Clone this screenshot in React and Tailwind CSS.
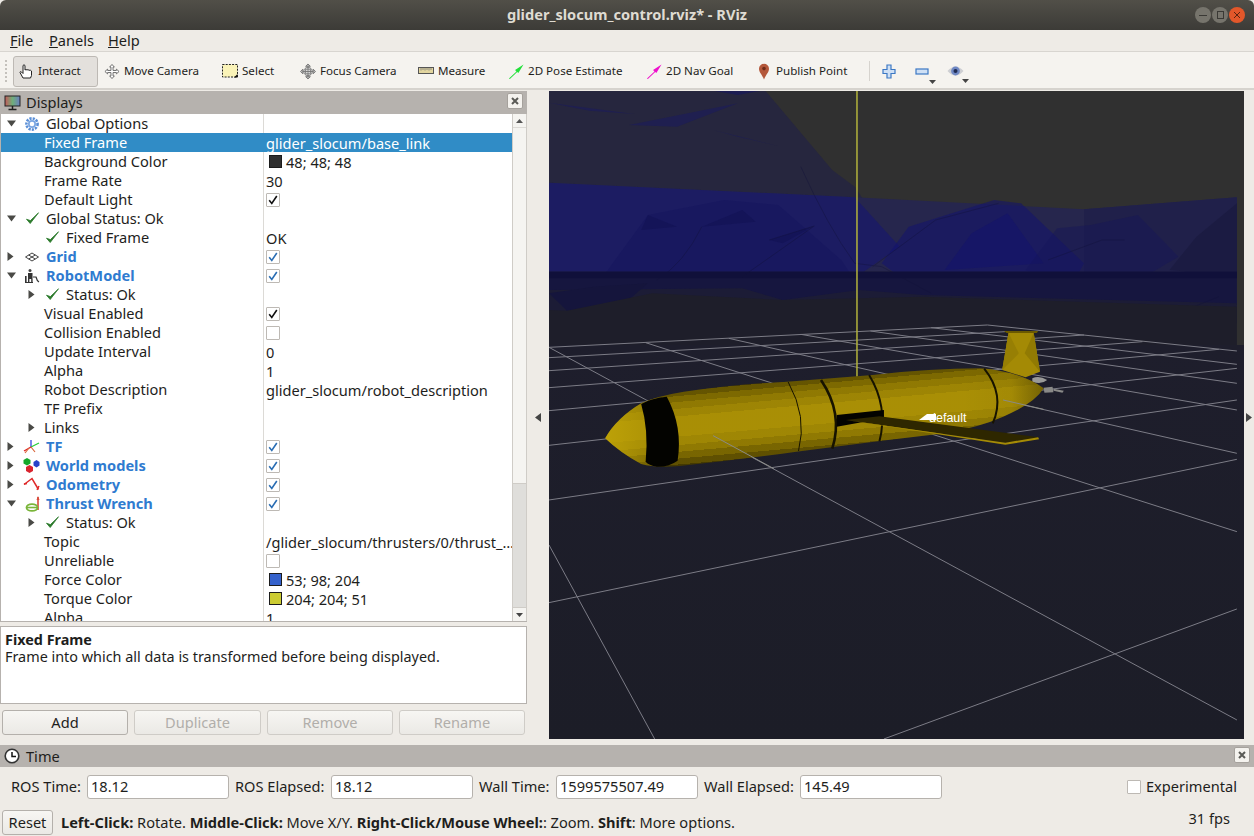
import React from "react";

const FONT = "font-['Noto_Sans','DejaVu_Sans',sans-serif]";

const Gear = () => (
  <svg width="16" height="16" viewBox="0 0 16 16">
    <circle cx="8" cy="8" r="5.6" fill="none" stroke="#5b8fd6" strokeWidth="2.6" strokeDasharray="2.2 1.1" />
    <circle cx="8" cy="8" r="4" fill="#7aa6e2" />
    <circle cx="8" cy="8" r="2.3" fill="#fff" />
  </svg>
);
const Check = () => (
  <svg width="15" height="15" viewBox="0 0 15 15">
    <path d="M1.5 8.2 L5.2 12.5 L13.5 1.8 L5.4 9.6 Z" fill="#2b7a2b" stroke="#2b7a2b" strokeWidth="0.8" strokeLinejoin="round" />
  </svg>
);
const GridIcon = () => (
  <svg width="16" height="16" viewBox="0 0 16 16" fill="none" stroke="#444" strokeWidth="1">
    <path d="M1.5 8 L8 4 L14.5 8 L8 12 Z M4.7 6 L11.2 10 M11.2 6 L4.7 10" />
  </svg>
);
const RobotIcon = () => (
  <svg width="16" height="16" viewBox="0 0 16 16">
    <circle cx="6" cy="2.5" r="1.5" fill="#444" />
    <rect x="4" y="5" width="4.5" height="6" fill="#333" />
    <rect x="1" y="8" width="1.6" height="6" fill="#333" />
    <rect x="4" y="11" width="1.4" height="3.5" fill="#333" />
    <rect x="7.2" y="11" width="1.4" height="3.5" fill="#333" />
    <path d="M9 9 H12 Q13 13 15 14" stroke="#333" strokeWidth="1.2" fill="none" />
    <path d="M1 14.5 H9" stroke="#333" strokeWidth="1" />
  </svg>
);
const TFIcon = () => (
  <svg width="17" height="17" viewBox="0 0 17 17" fill="none" strokeWidth="1.2">
    <path d="M8 9 L8 2" stroke="#2233dd" />
    <path d="M8 9 L16 5" stroke="#22cc33" />
    <path d="M8 9 L1 13" stroke="#e02222" />
    <path d="M8 9 L12 14 M2 15 L6 10" stroke="#d9663a" />
  </svg>
);
const ModelsIcon = () => (
  <svg width="18" height="18" viewBox="0 0 18 18">
    <path d="M4 1 L7.5 3 V6.5 L4 8.5 L0.5 6.5 V3 Z" fill="#14a82a" />
    <path d="M13.5 3 L16.5 5 V8.5 L13.5 10.5 L10.5 8.5 V5 Z" fill="#2743c9" />
    <path d="M6.5 8 L10 10 V14 L6.5 16 L3 14 V10 Z" fill="#d9232e" />
  </svg>
);
const OdomIcon = () => (
  <svg width="17" height="15" viewBox="0 0 17 15" fill="none" stroke="#df2a2a" strokeWidth="1.5">
    <path d="M1 7.5 L9 1.5 L15.5 12.5" />
    <path d="M1 7 L4 6.5 M14 12.8 L16 9" />
  </svg>
);
const ThrustIcon = () => (
  <svg width="16" height="18" viewBox="0 0 16 18" fill="none">
    <path d="M13 15 V2" stroke="#d84a3a" strokeWidth="1.6" />
    <path d="M11.5 5 L13 1 L14.5 5 Z" fill="#d84a3a" />
    <ellipse cx="7" cy="12.5" rx="5.5" ry="3.4" stroke="#7ab53a" strokeWidth="1.8" />
    <path d="M1 12.5 H13" stroke="#7ab53a" strokeWidth="1.6" />
  </svg>
);
const icons = { gear: Gear, check: Check, grid: GridIcon, robot: RobotIcon, tf: TFIcon, models: ModelsIcon, odom: OdomIcon, thrust: ThrustIcon };

const rows = [
  { x: 46, arrow: "d", ax: 6, icon: "gear", ix: 24, label: "Global Options" },
  { x: 44, label: "Fixed Frame", value: "glider_slocum/base_link", sel: true },
  { x: 44, label: "Background Color", swatch: "#303030", value: "48; 48; 48" },
  { x: 44, label: "Frame Rate", value: "30" },
  { x: 44, label: "Default Light", box: "k" },
  { x: 46, arrow: "d", ax: 6, icon: "check", ix: 25, label: "Global Status: Ok" },
  { x: 66, icon: "check", ix: 45, label: "Fixed Frame", value: "OK" },
  { x: 46, arrow: "r", ax: 7, icon: "grid", ix: 24, label: "Grid", bold: true, box: "b" },
  { x: 46, arrow: "d", ax: 6, icon: "robot", ix: 24, label: "RobotModel", bold: true, box: "b" },
  { x: 66, arrow: "r", ax: 28, icon: "check", ix: 45, label: "Status: Ok" },
  { x: 44, label: "Visual Enabled", box: "k" },
  { x: 44, label: "Collision Enabled", box: "e" },
  { x: 44, label: "Update Interval", value: "0" },
  { x: 44, label: "Alpha", value: "1" },
  { x: 44, label: "Robot Description", value: "glider_slocum/robot_description" },
  { x: 44, label: "TF Prefix" },
  { x: 44, arrow: "r", ax: 28, label: "Links" },
  { x: 46, arrow: "r", ax: 7, icon: "tf", ix: 23, label: "TF", bold: true, box: "b" },
  { x: 46, arrow: "r", ax: 7, icon: "models", ix: 23, label: "World models", bold: true, box: "b" },
  { x: 46, arrow: "r", ax: 7, icon: "odom", ix: 23, label: "Odometry", bold: true, box: "b" },
  { x: 46, arrow: "d", ax: 6, icon: "thrust", ix: 25, label: "Thrust Wrench", bold: true, box: "b" },
  { x: 66, arrow: "r", ax: 28, icon: "check", ix: 45, label: "Status: Ok" },
  { x: 44, label: "Topic", value: "/glider_slocum/thrusters/0/thrust_…" },
  { x: 44, label: "Unreliable", box: "e" },
  { x: 44, label: "Force Color", swatch: "#3562cc", value: "53; 98; 204" },
  { x: 44, label: "Torque Color", swatch: "#cccc33", value: "204; 204; 51" },
  { x: 44, label: "Alpha", value: "1" },
];

const Arrow = ({ dir }) =>
  dir === "d" ? (
    <svg width="11" height="7" viewBox="0 0 11 7"><path d="M1 0.5 H10 L5.5 6.5 Z" fill="#4a4a46" /></svg>
  ) : (
    <svg width="7" height="11" viewBox="0 0 7 11"><path d="M0.5 1 V10 L6.5 5.5 Z" fill="#4a4a46" /></svg>
  );

const CheckBox = ({ kind }) => (
  <span className="w-[14px] h-[14px] bg-white border border-[#bdb9b4] rounded-[1px] flex items-center justify-center">
    {kind !== "e" && (
      <svg width="10" height="10" viewBox="0 0 10 10" fill="none" stroke={kind === "b" ? "#2a6db3" : "#111"} strokeWidth="1.6">
        <path d="M1.2 5.2 L3.8 8.5 L8.8 1" />
      </svg>
    )}
  </span>
);

const Row = ({ r }) => {
  const Ic = r.icon && icons[r.icon];
  return (
    <div className={`h-[19px] flex shrink-0 ${r.sel ? "bg-[#308cc6] text-white" : "text-[#1e1e1c]"}`}>
      <div className={`relative w-[263px] h-full shrink-0 ${r.sel ? "" : "border-r border-[#dcdad6]"}`}>
        {r.arrow && (
          <span className="absolute top-0 h-[19px] flex items-center" style={{ left: r.ax - 1 }}><Arrow dir={r.arrow} /></span>
        )}
        {Ic && (
          <span className="absolute top-0 h-[19px] flex items-center" style={{ left: r.ix - 1 }}><Ic /></span>
        )}
        <span className={`absolute top-0 leading-[18px] whitespace-nowrap ${r.bold ? "font-bold text-[#2f7bd0]" : ""}`} style={{ left: r.x - 1 }}>{r.label}</span>
      </div>
      <div className="flex-1 flex items-center pl-[2px] whitespace-nowrap leading-[18px]">
        {r.swatch && <span className="ml-[3px] mr-[4px] w-[13px] h-[13px] border border-[#1c1c1c]" style={{ background: r.swatch }} />}
        {r.box && <CheckBox kind={r.box} />}
        {r.value}
      </div>
    </div>
  );
};

const CloseBtn = () => (
  <span className="w-[16px] h-[16px] bg-[#f4f2ee] border border-[#a5a19c] rounded-[2px] flex items-center justify-center">
    <svg width="8" height="8" viewBox="0 0 8 8" stroke="#5a5a56" strokeWidth="2"><path d="M1 1 L7 7 M7 1 L1 7" /></svg>
  </span>
);

const TB = ({ ml, w, icon, children }) => (
  <div className="flex items-center shrink-0 h-[30px]" style={{ marginLeft: ml }}>
    <span className="w-[16px] h-[16px] flex items-center justify-center shrink-0">{icon}</span>
    <span className="ml-[4px] whitespace-nowrap text-[#1e1e1c] text-[11.6px]" style={{ width: w }}>{children}</span>
  </div>
);

const HandI = (
  <svg width="17" height="17" viewBox="0 0 17 17" fill="#fff" stroke="#222" strokeWidth="1"><path d="M5 15 L2 9.5 Q2 8 3.5 9 L5 10.5 V2.5 Q6 1 7 2.5 V7 Q8 6 9 7 Q10 6 11 7.3 Q12.3 6.6 13.5 8 V12.5 L12.5 15 Z" /></svg>
);
const MoveI = (
  <svg width="17" height="17" viewBox="0 0 17 17" fill="#fff" stroke="#666" strokeWidth="1"><path d="M8.5 1 L11 3.8 H9.6 V7.4 H13.2 V6 L16 8.5 L13.2 11 V9.6 H9.6 V13.2 H11 L8.5 16 L6 13.2 H7.4 V9.6 H3.8 V11 L1 8.5 L3.8 6 V7.4 H7.4 V3.8 H6 Z" /></svg>
);
const SelectI = (
  <svg width="16" height="14" viewBox="0 0 16 14"><rect x="0.5" y="0.5" width="15" height="12.5" fill="#faf3b8" stroke="#222" strokeDasharray="2 1.2" /><path d="M12 13.5 H15.5 V10 Z" fill="#111" /></svg>
);
const FocusI = (
  <svg width="17" height="17" viewBox="0 0 17 17" fill="none" stroke="#777" strokeWidth="1"><path d="M8.5 0.5 L11 3 H6 Z M8.5 16.5 L11 14 H6 Z M0.5 8.5 L3 6 V11 Z M16.5 8.5 L14 6 V11 Z" fill="#bbb" /><circle cx="8.5" cy="8.5" r="4.5" fill="#e6e6e6" /><path d="M8.5 3 V14 M3 8.5 H14 M6 6 H11 V11 H6 Z" /></svg>
);
const RulerI = (
  <svg width="16" height="8" viewBox="0 0 16 8"><rect x="0.5" y="0.5" width="15" height="6" fill="#e2d59f" stroke="#555" /><path d="M3 1 V3.5 M5 1 V3 M7 1 V3.5 M9 1 V3 M11 1 V3.5 M13 1 V3" stroke="#777" strokeWidth="0.8" /></svg>
);
const ArrowI = (c) => (
  <svg width="17" height="17" viewBox="0 0 17 17"><path d="M1 16 L9 8.5 L7.5 7 L16.5 1 L11 10 L9.8 9 L2 16.5 Z" fill={c} /></svg>
);
const PinI = (
  <svg width="14" height="17" viewBox="0 0 14 17"><path d="M7 16.5 C5 11.5 2 9.5 2 5.8 A5 5 0 0 1 12 5.8 C12 9.5 9 11.5 7 16.5 Z" fill="#b4573a" /><circle cx="7" cy="5.6" r="1.8" fill="#6e2c1a" /></svg>
);
const Plus = (
  <svg width="14" height="15" viewBox="0 0 14 15"><path d="M5 1 H9 V5.5 H13 V9.5 H9 V14 H5 V9.5 H1 V5.5 H5 Z" fill="#cfe0f5" stroke="#3c78c4" strokeWidth="1.2" /></svg>
);
const Minus = (
  <svg width="14" height="7" viewBox="0 0 14 7"><rect x="1" y="1" width="12" height="5" fill="#cfe0f5" stroke="#3c78c4" strokeWidth="1.2" /></svg>
);
const Eye = (
  <svg width="17" height="12" viewBox="0 0 17 12"><path d="M0.5 6 Q8.5 -3 16.5 6 Q8.5 15 0.5 6 Z" fill="#cdced2" /><circle cx="8.5" cy="6" r="4.4" fill="#6f88c4" /><circle cx="8.5" cy="6" r="2" fill="#1f2b52" /></svg>
);
const Drop = () => <svg width="7" height="4" viewBox="0 0 7 4"><path d="M0 0 H7 L3.5 4 Z" fill="#444" /></svg>;

const Btn = ({ w, disabled, children }) => (
  <div className={`h-[25px] shrink-0 flex items-center justify-center rounded-[3px] border ${disabled ? "border-[#cfccc7] text-[#b1aeaa]" : "border-[#b4b0ab] text-[#1e1e1c]"} bg-gradient-to-b from-[#f7f6f3] to-[#ebe9e5]`} style={{ width: w }}>{children}</div>
);

const Field = ({ w, v }) => (
  <div className="h-[24px] bg-white border border-[#b6b2ad] rounded-[3px] pl-[3px] flex items-center shrink-0" style={{ width: w }}>{v}</div>
);
const Lab = ({ w, ml, children }) => (
  <span className="whitespace-nowrap shrink-0" style={{ width: w, marginLeft: ml }}>{children}</span>
);

const gridLines = [
  [0,82,975,15],[0,113,1015,35],[0,152,1190,45],[0,203,1320,65],[0,272,1490,88],[0,376,1530,145],[0,540,1530,240],[0,848,1530,418],[745,1257,1530,867],
  [975,15,1530,93],[850,23,1530,133],[715,33,1530,190],[560,43,1530,270],[400,55,1530,400],[215,68,1530,635],[0,82,1530,1200],[0,675,235,1257],
];

const bodyPath = "M125 355 Q150 295 205 250 Q240 228 300 215 Q420 192 530 185 L720 165 Q850 145 960 145 Q1050 155 1100 205 Q1080 250 1010 290 Q960 320 880 340 L740 362 L550 395 Q420 420 290 438 Q240 445 205 432 Q160 400 125 355 Z";

const bodyStops = [
  [0, "#3a3000"], [0.06, "#3a3000"], [0.06, "#5a4b00"], [0.12, "#5a4b00"], [0.12, "#756200"], [0.19, "#756200"],
  [0.19, "#8a7402"], [0.27, "#8a7402"], [0.27, "#998104"], [0.36, "#998104"], [0.36, "#a68c05"], [0.6, "#a68c05"],
  [0.6, "#9b8304"], [0.7, "#9b8304"], [0.7, "#8a7402"], [0.78, "#8a7402"], [0.78, "#705e00"], [0.86, "#705e00"],
  [0.86, "#544600"], [0.93, "#544600"], [0.93, "#362d00"], [1, "#362d00"],
];

const Scene = () => (
  <svg className="block" width="695" height="648" viewBox="549 91 695 648">
    <defs>
      <linearGradient id="body" gradientUnits="userSpaceOnUse" x1="560" y1="165" x2="590" y2="415">
        {bodyStops.map((s, i) => <stop key={i} offset={s[0]} stopColor={s[1]} />)}
      </linearGradient>
      <linearGradient id="tail" gradientUnits="userSpaceOnUse" x1="920" y1="0" x2="1100" y2="0">
        <stop offset="0" stopColor="#000" stopOpacity="0" />
        <stop offset="0.6" stopColor="#000" stopOpacity="0.04" />
        <stop offset="1" stopColor="#000" stopOpacity="0.35" />
      </linearGradient>
      <linearGradient id="nose" gradientUnits="userSpaceOnUse" x1="125" y1="0" x2="260" y2="0">
        <stop offset="0" stopColor="#c4a808" stopOpacity="0.75" />
        <stop offset="1" stopColor="#c4a808" stopOpacity="0.1" />
      </linearGradient>
      <linearGradient id="floor" x1="0" y1="0" x2="0" y2="1">
        <stop offset="0" stopColor="#1e1e2c" />
        <stop offset="1" stopColor="#1c1d27" />
      </linearGradient>
    </defs>
    <rect x="549" y="91" width="695" height="648" fill="#303030" />
    <g transform="translate(549 90) scale(0.4496 0.3333)">
      <path d="M0 0 H480 L630 240 L680 290 L700 330 L0 278 Z" fill="#26263e" />
      <path d="M0 38 L190 72 L90 62 Z M178 105 L420 40 L285 110 Z M365 120 L510 168 L420 140 Z" fill="#1f1f50" />
      <path d="M355 0 H480 L420 15 Z" fill="#1c1c52" />
      <path d="M0 278 L680 322 L1190 358 L1530 322 V545 H0 Z" fill="#26264d" />
      <path d="M0 278 L680 322 L780 470 L700 545 H0 Z" fill="#1c1c62" />
      <path d="M1190 358 L1530 322 V545 H1190 Z" fill="#20204a" />
      <path d="M800 410 L990 330 L1050 340 L1190 520 L1170 570 L780 560 L740 520 Z" fill="#121270" opacity="0.55" />
      <path d="M880 540 L940 430 L1020 370 L1100 520 Z" fill="#101070" opacity="0.4" />
      <path d="M1060 540 L1130 415 L1205 405 L1310 375 L1400 500 L1300 580 L1120 580 Z" fill="#14145a" opacity="0.4" />
      <path d="M120 560 L220 375 L390 330 L510 345 L650 510 L690 590 L440 590 L120 590 Z" fill="#10105a" opacity="0.28" />
      <path d="M340 410 L430 360 L460 395 Z M205 420 L220 375 L285 410 Z M490 450 L590 408 L520 460 Z" fill="#10104f" opacity="0.45" />
      <path d="M1530 340 L1440 440 L1380 540 L1530 560 Z" fill="#1a1a40" opacity="0.8" />
      <rect x="0" y="545" width="1530" height="100" fill="#16163f" />
      <path d="M0 545 H1530 V565 H0 Z" fill="#10103a" />
      <path d="M0 600 L430 595 L520 630 L690 600 L830 615 L1530 640 V700 H0 Z" fill="#1c1c36" />
      <path d="M0 610 L40 662 L160 650 L220 580 L100 590 Z" fill="#15153c" />
      <g fill="none" stroke="#12123a" strokeWidth="1" opacity="0.4">
        <path vectorEffect="non-scaling-stroke" d="M560 230 Q620 410 680 520 L740 530 L850 610" />
        <path vectorEffect="non-scaling-stroke" d="M340 410 Q300 520 240 570" />
        <path vectorEffect="non-scaling-stroke" d="M720 530 L860 390 L1000 340" />
        <path vectorEffect="non-scaling-stroke" d="M1110 510 L1230 450 L1280 450" />
        <path vectorEffect="non-scaling-stroke" d="M1380 680 L1490 620" />
        <path vectorEffect="non-scaling-stroke" d="M490 450 L590 408 L430 560" />
      </g>
      <path d="M0 660 V790 H1530 V650 L1400 645 L830 620 L520 630 L230 610 L40 662 Z" fill="#1e1e2a" />
    </g>
    <rect x="549" y="345" width="695" height="394" fill="url(#floor)" />
    <g transform="translate(549 320) scale(0.4496 0.3333)">
      <g stroke="#7c7c86" strokeWidth="1" fill="none">
        {gridLines.map((l, i) => (
          <line key={i} vectorEffect="non-scaling-stroke" x1={l[0]} y1={l[1]} x2={l[2]} y2={l[3]} />
        ))}
      </g>
      <path vectorEffect="non-scaling-stroke" d="M685 -690 V170" stroke="#b3b33c" strokeWidth="1.5" />
      <path d="M1008 150 L1022 38 H1078 L1092 155 L1060 172 Z" fill="#a48a05" />
      <path d="M1022 38 L1045 100 L1008 150 Z" fill="#977f04" />
      <path d="M1078 38 L1058 100 L1092 155 Z" fill="#917a03" />
      <path d="M1012 33 H1088 L1085 39 H1018 Z" fill="#6b5900" />
      <path d="M1075 175 Q1090 165 1108 180 Q1095 195 1075 185 Z" fill="#9a9a98" />
      <path d="M1100 203 L1120 200 L1122 217 L1102 218 Z" fill="#8a8a88" />
      <path d="M1122 206 L1145 212 L1142 218 L1122 212 Z" fill="#8a8a88" />
      <path d={bodyPath} fill="url(#body)" />
      <path d={bodyPath} fill="url(#tail)" />
      <path d={bodyPath} fill="url(#nose)" />
      <path d="M205 252 Q225 235 262 230 Q298 320 286 422 Q265 442 240 440 Q222 436 215 425 Q222 330 205 252 Z" fill="#030300" />
      <g fill="none" stroke="#171300">
        <path vectorEffect="non-scaling-stroke" d="M532 186 Q575 290 555 393" strokeWidth="1" />
        <path vectorEffect="non-scaling-stroke" d="M605 180 Q655 280 630 386" strokeWidth="2.6" />
        <path vectorEffect="non-scaling-stroke" d="M712 165 Q755 260 735 364" strokeWidth="2" />
        <path vectorEffect="non-scaling-stroke" d="M968 146 Q1015 225 987 310" strokeWidth="2" />
      </g>
      <path d="M640 285 L745 270 V295 L640 320 Z" fill="#030300" />
      <path d="M660 300 L735 289 L1090 352 L1015 368 Z" fill="#2e2700" />
      <path d="M660 300 L1015 368 L1088 352 L1090 358 L1015 374 Z" fill="#a58b05" />
      <g stroke="#8a8a86" strokeWidth="1" fill="none">
        <line vectorEffect="non-scaling-stroke" x1="365" y1="347" x2="500" y2="446" />
        <line vectorEffect="non-scaling-stroke" x1="1010" y1="240" x2="1100" y2="268" />
      </g>
    </g>
    <g fontFamily="'Liberation Sans',sans-serif" fontSize="12.5" fill="#fff">
      <path d="M919 420 L927 414 H936 V420 Z" fill="#fff" />
      <text x="929" y="422">default</text>
    </g>
  </svg>
);

export default function App() {
  return (
    <div className={`w-[1254px] h-[836px] overflow-hidden flex flex-col bg-[#eeebe6] text-[14.6px] text-[#1e1e1c] ${FONT}`}>
      <div className="h-[30px] shrink-0 rounded-t-[6px] bg-gradient-to-b from-[#514f48] to-[#3c3b37] flex items-center justify-center relative">
        <span className="font-bold text-[14.6px] text-[#dfdbd2]">glider_slocum_control.rviz* - RViz</span>
        <div className="absolute right-[9px] top-[7px] flex gap-[1px]">
          <span className="w-[16px] h-[16px] rounded-full bg-[#76746c] flex items-center justify-center"><span className="w-[8px] h-[1px] bg-[#3a3935]" /></span>
          <span className="w-[16px] h-[16px] rounded-full bg-[#76746c] flex items-center justify-center"><span className="w-[7px] h-[8px] border border-[#3a3935]" /></span>
          <span className="w-[16px] h-[16px] rounded-full bg-[#e2572a] flex items-center justify-center">
            <svg width="8" height="8" viewBox="0 0 8 8" stroke="#5a2410" strokeWidth="1"><path d="M1 1 L7 7 M7 1 L1 7" /></svg>
          </span>
        </div>
      </div>
      <div className="h-[22px] shrink-0 flex items-center border-b border-[#d8d5d0] pl-[10px] gap-[14px]">
        <span className="w-[25px]"><span className="underline">F</span>ile</span>
        <span className="w-[45px]"><span className="underline">P</span>anels</span>
        <span><span className="underline">H</span>elp</span>
      </div>
      <div className="h-[38px] shrink-0 bg-[#f5f3ef] border-b-2 border-[#d6d3ce] flex items-center pt-[2px]">
        <div className="ml-[5px] w-[6px] h-[22px] border-l-2 border-dotted border-[#c4c1bc]" />
        <div className="ml-[2px] w-[85px] h-[31px] shrink-0 flex items-center bg-[#e3e0dc] border border-[#bdb9b4] rounded-[3px] pl-[4px]">
          <span className="w-[17px] flex justify-center">{HandI}</span>
          <span className="ml-[3px] text-[11.6px]">Interact</span>
        </div>
        <TB ml={6} w={84} icon={MoveI}>Move Camera</TB>
        <TB ml={14} w={58} icon={SelectI}>Select</TB>
        <TB ml={0} w={98} icon={FocusI}>Focus Camera</TB>
        <TB ml={0} w={70} icon={RulerI}>Measure</TB>
        <TB ml={0} w={118} icon={ArrowI("#22e03a")}>2D Pose Estimate</TB>
        <TB ml={0} w={90} icon={ArrowI("#ee11cc")}>2D Nav Goal</TB>
        <TB ml={0} w={92} icon={PinI}>Publish Point</TB>
        <div className="ml-[1px] w-px h-[20px] bg-[#d6d3ce]" />
        <span className="ml-[12px] w-[14px] flex justify-center">{Plus}</span>
        <span className="ml-[18px] w-[15px] flex justify-center relative">{Minus}<span className="absolute left-[15px] top-[12px] flex"><Drop /></span></span>
        <span className="ml-[18px] w-[17px] flex justify-center relative">{Eye}<span className="absolute left-[15px] top-[14px] flex"><Drop /></span></span>
      </div>
      <div className="h-[655px] shrink-0 flex">
        <div className="w-[527px] shrink-0 flex flex-col">
          <div className="mt-[1px] h-[23px] shrink-0 bg-[#b6b2ae] flex items-center pl-[4px] relative">
            <svg width="17" height="16" viewBox="0 0 17 16">
              <defs>
                <linearGradient id="mon" x1="0" x2="1" y1="0" y2="0">
                  <stop offset="0" stopColor="#c45a5a" /><stop offset="0.5" stopColor="#6fae7a" /><stop offset="1" stopColor="#6a7fc0" />
                </linearGradient>
              </defs>
              <rect x="1" y="1" width="15" height="10" fill="url(#mon)" stroke="#222" />
              <path d="M8.5 11 V14 M4.5 14.5 H12.5" stroke="#222" strokeWidth="1.5" />
            </svg>
            <span className="ml-[5px]">Displays</span>
            <span className="absolute left-[507px] top-[2px]"><CloseBtn /></span>
          </div>
          <div className="h-[508px] shrink-0 border-l border-[#b6b2ae] flex overflow-hidden bg-white border-b">
            <div className="w-[511px] shrink-0 flex flex-col overflow-hidden">
              {rows.map((r, i) => <Row key={i} r={r} />)}
            </div>
            <div className="w-[15px] shrink-0 flex flex-col border-x border-[#cfccc7] bg-[#f5f4f1]">
              <div className="h-[13px] flex items-center justify-center"><svg width="7" height="4" viewBox="0 0 7 4"><path d="M0 4 H7 L3.5 0 Z" fill="#555" /></svg></div>
              <div className="h-[356px] border-t border-[#dcdad6]" />
              <div className="flex-1 bg-[#dfdedb] border-t border-[#cfccc7]" />
              <div className="h-[14px] flex items-center justify-center border-t border-[#cfccc7]"><Drop /></div>
            </div>
          </div>
          <div className="h-[4px] shrink-0" />
          <div className="h-[78px] shrink-0 bg-white border border-[#b6b2ae] px-[4px] pt-[4px] leading-[17px] text-[14.4px]">
            <div className="font-bold">Fixed Frame</div>
            <div>Frame into which all data is transformed before being displayed.</div>
          </div>
          <div className="mt-[6px] ml-[2px] flex gap-[6px]">
            <Btn w={126}>Add</Btn>
            <Btn w={127} disabled>Duplicate</Btn>
            <Btn w={126} disabled>Remove</Btn>
            <Btn w={126} disabled>Rename</Btn>
          </div>
        </div>
        <div className="w-[22px] shrink-0 flex items-center justify-center">
          <svg width="6" height="9" viewBox="0 0 6 9"><path d="M6 0 V9 L0 4.5 Z" fill="#444" /></svg>
        </div>
        <div className="mt-[1px] w-[695px] h-[648px] shrink-0 overflow-hidden"><Scene /></div>
        <div className="w-[10px] shrink-0 flex items-center justify-center">
          <svg width="6" height="9" viewBox="0 0 6 9"><path d="M0 0 V9 L6 4.5 Z" fill="#444" /></svg>
        </div>
      </div>
      <div className="h-[22px] shrink-0 bg-[#b6b2ae] flex items-center pl-[4px] relative">
        <svg width="16" height="16" viewBox="0 0 16 16" fill="none"><circle cx="8" cy="8" r="6.8" fill="#fff" stroke="#333" strokeWidth="1.6" /><path d="M8 4 V8.5 H12" stroke="#111" strokeWidth="1.5" /></svg>
        <span className="ml-[6px] pt-[2px]">Time</span>
        <span className="absolute left-[1234px] top-[2px]"><CloseBtn /></span>
      </div>
      <div className="h-[35px] shrink-0 flex items-center pt-[4px]">
        <Lab ml={11} w={76}>ROS Time:</Lab>
        <Field w={142} v="18.12" />
        <Lab ml={6} w={96}>ROS Elapsed:</Lab>
        <Field w={142} v="18.12" />
        <Lab ml={6} w={77}>Wall Time:</Lab>
        <Field w={142} v="1599575507.49" />
        <Lab ml={6} w={96}>Wall Elapsed:</Lab>
        <Field w={142} v="145.49" />
        <span className="ml-[185px]"><CheckBox kind="e" /></span>
        <span className="ml-[5px] whitespace-nowrap">Experimental</span>
      </div>
      <div className="flex-1 flex items-center pl-[2px] pt-[6px]">
        <Btn w={51}>Reset</Btn>
        <span className="ml-[8px] whitespace-nowrap">
          <b>Left-Click:</b> Rotate. <b>Middle-Click:</b> Move X/Y. <b>Right-Click/Mouse Wheel:</b>: Zoom. <b>Shift</b>: More options.
        </span>
        <span className="ml-auto mr-[24px] mb-[8px] whitespace-nowrap">31 fps</span>
      </div>
    </div>
  );
}
